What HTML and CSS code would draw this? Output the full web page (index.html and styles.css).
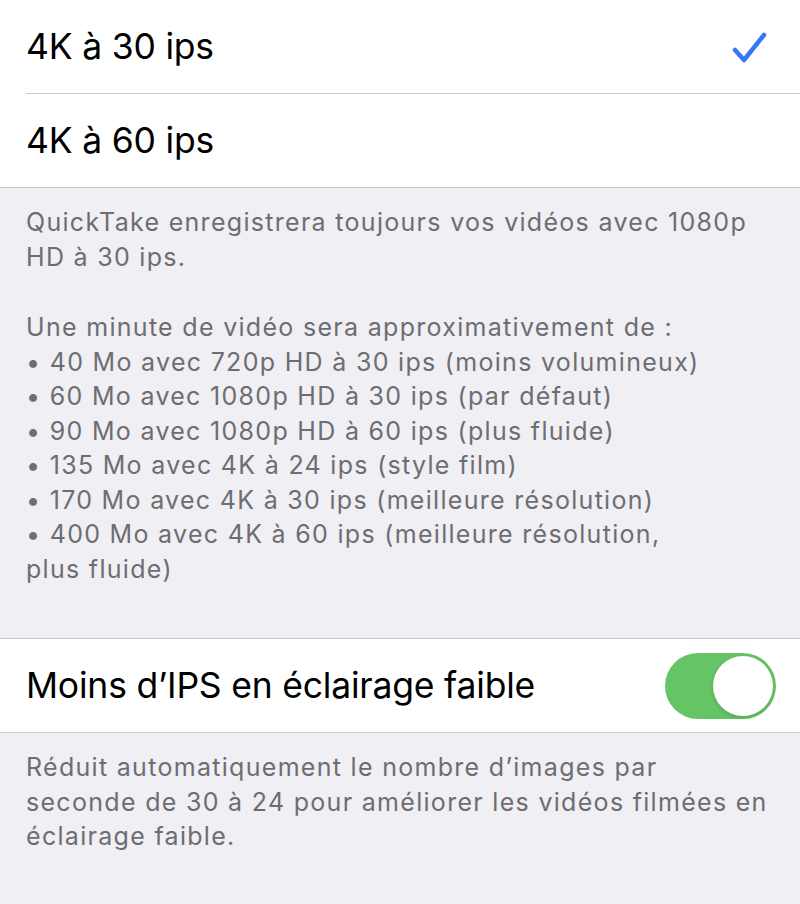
FILE: index.html
```html
<!DOCTYPE html>
<html lang="fr">
<head>
<meta charset="utf-8">
<link rel="stylesheet" href="styles.css">
</head>
<body>
<div class="page">
  <div class="group">
    <div class="row">
      <span class="label">4K à 30 ips</span>
      <svg class="check" width="36" height="34" viewBox="0 0 36 34"><path d="M3 19 L12 29 L32 4" fill="none" stroke="#3478f6" stroke-width="4.5" stroke-linecap="round" stroke-linejoin="round"/></svg>
    </div>
    <div class="row last">
      <span class="label">4K à 60 ips</span>
    </div>
  </div>
  <div class="footer tall">
    <p>QuickTake enregistrera toujours vos vidéos avec 1080p<br>HD à 30 ips.</p>
    <p>Une minute de vidéo sera approximativement de :<br>
    • 40 Mo avec 720p HD à 30 ips (moins volumineux)<br>
    • 60 Mo avec 1080p HD à 30 ips (par défaut)<br>
    • 90 Mo avec 1080p HD à 60 ips (plus fluide)<br>
    • 135 Mo avec 4K à 24 ips (style film)<br>
    • 170 Mo avec 4K à 30 ips (meilleure résolution)<br>
    • 400 Mo avec 4K à 60 ips (meilleure résolution,<br>plus fluide)</p>
  </div>
  <div class="group">
    <div class="row last">
      <span class="label">Moins d’IPS en éclairage faible</span>
      <span class="toggle"><span class="knob"></span></span>
    </div>
  </div>
  <div class="footer">
    <p>Réduit automatiquement le nombre d’images par<br>seconde de 30 à 24 pour améliorer les vidéos filmées en<br>éclairage faible.</p>
  </div>
</div>
</body>
</html>
```
FILE: styles.css
```css
html, body {
  margin: 0;
  padding: 0;
  background: #efeff4;
}
.page {
  width: 800px;
  height: 904px;
  overflow: hidden;
  background: #efeff4;
  font-family: Inter, Roboto, "Liberation Sans", sans-serif;
}
.group {
  background: #fff;
  border-top: 1px solid #c8c7cc;
  border-bottom: 1px solid #c8c7cc;
}
.group:first-child {
  border-top: none;
}
.row {
  height: 94px;
  margin-left: 26px;
  padding-right: 24px;
  display: flex;
  align-items: center;
  justify-content: space-between;
  border-bottom: 1px solid #c8c7cc;
  box-sizing: border-box;
}
.row.last {
  border-bottom: none;
  height: 93px;
}
.label {
  font-size: 35.5px;
  color: #000;
  letter-spacing: -0.2px;
}
.check {
  margin-right: 8px;
  margin-top: 2px;
}
.footer {
  padding: 17px 10px 0 26px;
  box-sizing: border-box;
  color: #6d6d72;
  font-size: 25px;
  line-height: 34.5px;
  letter-spacing: 1.3px;
  white-space: nowrap;
}
.footer.tall {
  height: 450px;
}
.footer p {
  margin: 0 0 36px 0;
}
.footer p:last-child {
  margin-bottom: 0;
}
.toggle {
  width: 111px;
  height: 66px;
  border-radius: 33px;
  background: #65c466;
  display: flex;
  align-items: center;
  justify-content: flex-end;
  padding: 3px;
  box-sizing: border-box;
}
.knob {
  width: 60px;
  height: 60px;
  border-radius: 50%;
  background: #fff;
  box-shadow: 0 2px 4px rgba(0,0,0,0.15);
}
```
